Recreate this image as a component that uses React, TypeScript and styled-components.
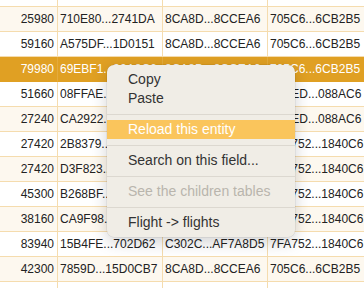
import * as React from 'react';
import styled, { createGlobalStyle } from 'styled-components';

interface Row {
    id: string;
    cells: string[];
}

interface RowLook {
    $tone: 'plain' | 'alt' | 'selected';
}

const rows: Row[] = [
    { id: 'r1', cells: ['25980', '710E80...2741DA', '8CA8D...8CCEA6', '705C6...6CB2B5'] },
    { id: 'r2', cells: ['59160', 'A575DF...1D0151', '8CA8D...8CCEA6', '705C6...6CB2B5'] },
    { id: 'r3', cells: ['79980', '69EBF1...32A8C6', '8CA8D...8CCEA6', '705C6...6CB2B5'] },
    { id: 'r4', cells: ['51660', '08FFAE...9C41B2', '8CA8D...8CCEA6', 'E71ED...088AC6'] },
    { id: 'r5', cells: ['27240', 'CA2922...B7E014', '8CA8D...8CCEA6', 'E71ED...088AC6'] },
    { id: 'r6', cells: ['27420', '2B8379...04F6A1', 'C302C...AF7A8D5', '7FA752...1840C6'] },
    { id: 'r7', cells: ['27420', 'D3F823...6E19C0', 'C302C...AF7A8D5', '7FA752...1840C6'] },
    { id: 'r8', cells: ['45300', 'B268BF...A0D734', 'C302C...AF7A8D5', '7FA752...1840C6'] },
    { id: 'r9', cells: ['38160', 'CA9F98...5B2E07', 'C302C...AF7A8D5', '7FA752...1840C6'] },
    { id: 'r10', cells: ['83940', '15B4FE...702D62', 'C302C...AF7A8D5', '7FA752...1840C6'] },
    { id: 'r11', cells: ['42300', '7859D...15D0CB7', '8CA8D...8CCEA6', '705C6...6CB2B5'] },
];

const SELECTED = 'r3';

const GlobalStyle = createGlobalStyle`
    html, body {
        margin: 0;
        padding: 0;
        background: #ffffff;
    }
    body {
        font-family: "Liberation Sans", Arial, sans-serif;
        overflow: hidden;
    }
`;

const Page = styled.div`
    position: relative;
    width: 364px;
    height: 288px;
    overflow: hidden;
`;

const Table = styled.div`
    display: flex;
    flex-direction: column;
`;

const TableRow = styled.div<RowLook & { $height?: number }>`
    display: grid;
    grid-template-columns: 58px 105px 105px 1fr;
    flex: none;
    height: ${props => props.$height || 25}px;
    background: ${props =>
        props.$tone === 'selected' ? '#e0a023' : props.$tone === 'alt' ? '#fdf8ef' : '#ffffff'};
    color: ${props => (props.$tone === 'selected' ? '#ffffff' : '#222222')};
`;

const Cell = styled.div<RowLook & { $num?: boolean }>`
    box-sizing: border-box;
    border-right: 1px solid ${props => (props.$tone === 'selected' ? '#e4ab3c' : '#f5dcae')};
    border-bottom: 1px solid ${props => (props.$tone === 'selected' ? '#e0a023' : '#f5dcae')};
    font-size: 12px;
    line-height: 24px;
    white-space: nowrap;
    overflow: hidden;
    padding: ${props => (props.$num ? '0 3px 0 0' : '0 0 0 2px')};
    text-align: ${props => (props.$num ? 'right' : 'left')};
    &:last-child {
        border-right: none;
    }
`;

const Menu = styled.div`
    position: absolute;
    left: 107px;
    top: 65px;
    width: 188px;
    padding: 5px 0;
    background: #f0ede6;
    border-radius: 7px;
    box-shadow: 0 0 0 0.5px rgba(0, 0, 0, 0.1), 0 5px 16px rgba(0, 0, 0, 0.18);
    font-size: 14px;
    overflow: hidden;
`;

const MenuItem = styled.div<{ $active?: boolean; $disabled?: boolean }>`
    height: 19px;
    line-height: 19px;
    padding-left: 21px;
    white-space: nowrap;
    background: ${props => (props.$active ? '#fac55c' : 'transparent')};
    color: ${props => (props.$active ? '#ffffff' : props.$disabled ? '#b9b5ad' : '#333333')};
`;

const Separator = styled.div`
    height: 12px;
    display: flex;
    align-items: center;
    &::after {
        content: '';
        display: block;
        width: 100%;
        height: 1px;
        background: #dcd8d0;
    }
`;

const toneFor = (index: number, id: string): RowLook['$tone'] => {
    if (id === SELECTED) return 'selected';
    return index % 2 === 0 ? 'alt' : 'plain';
};

const App: React.FC = () => {
    return (
        <Page>
            <GlobalStyle />
            <Table>
                <TableRow $tone='plain' $height={7}>
                    {[0, 1, 2, 3].map(i => (
                        <Cell key={i} $tone='plain' />
                    ))}
                </TableRow>
                {rows.map((row, index) => {
                    const tone = toneFor(index, row.id);
                    return (
                        <TableRow key={row.id} $tone={tone}>
                            {row.cells.map((cell, i) => (
                                <Cell key={i} $tone={tone} $num={i === 0}>
                                    {cell}
                                </Cell>
                            ))}
                        </TableRow>
                    );
                })}
                <TableRow $tone='plain'>
                    {[0, 1, 2, 3].map(i => (
                        <Cell key={i} $tone='plain' />
                    ))}
                </TableRow>
            </Table>

            <Menu>
                <MenuItem>Copy</MenuItem>
                <MenuItem>Paste</MenuItem>
                <Separator />
                <MenuItem $active>Reload this entity</MenuItem>
                <Separator />
                <MenuItem>Search on this field...</MenuItem>
                <Separator />
                <MenuItem $disabled>See the children tables</MenuItem>
                <Separator />
                <MenuItem>Flight -&gt; flights</MenuItem>
            </Menu>
        </Page>
    );
};

export default App;
